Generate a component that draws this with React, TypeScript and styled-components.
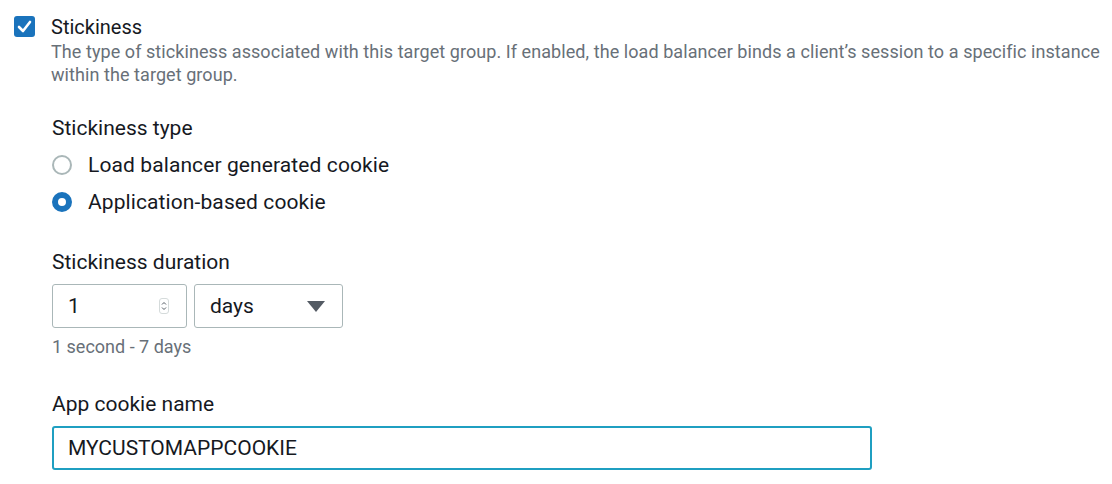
import React from "react";
import styled, { createGlobalStyle } from "styled-components";

const Global = createGlobalStyle`
  body {
    margin: 0;
    background: #ffffff;
    font-family: Roboto, "Noto Sans", sans-serif;
    color: #16191f;
  }
`;

const Page = styled.div`
  padding: 15px 0 0 14px;
  width: 1112px;
  height: 484px;
  box-sizing: border-box;
`;

const Header = styled.div`
  display: flex;
  gap: 16px;
  align-items: flex-start;
`;

const CheckBox = styled.div`
  width: 21px;
  height: 21px;
  margin-top: 1px;
  border-radius: 3px;
  background: #1a73bc;
  display: flex;
  align-items: center;
  justify-content: center;
  flex: none;
`;

const HeaderText = styled.div`
  display: flex;
  flex-direction: column;
`;

const Title = styled.div`
  font-size: 20px;
  line-height: 24px;
  color: #16191f;
`;

const Description = styled.div`
  margin-top: 1px;
  font-size: 18px;
  line-height: 23px;
  color: #687078;
  letter-spacing: 0.07px;
  white-space: nowrap;
`;

const Body = styled.div`
  padding-left: 38px;
  display: flex;
  flex-direction: column;
`;

const Field = styled.div<{ $top: number }>`
  margin-top: ${(p) => p.$top}px;
  display: flex;
  flex-direction: column;
`;

const Label = styled.div`
  font-size: 21px;
  line-height: 26px;
  color: #16191f;
`;

const RadioGroup = styled.div`
  margin-top: 11px;
  display: flex;
  flex-direction: column;
  gap: 11px;
`;

const RadioRow = styled.div`
  display: flex;
  align-items: center;
  gap: 16px;
  height: 26px;
`;

const RadioDot = styled.div<{ $checked?: boolean }>`
  width: 20px;
  height: 20px;
  box-sizing: border-box;
  border-radius: 50%;
  background: #ffffff;
  border: ${(p) => (p.$checked ? "6px solid #1a73bc" : "2px solid #aab7b8")};
  flex: none;
`;

const RadioText = styled.span`
  font-size: 21px;
  line-height: 26px;
  color: #16191f;
  letter-spacing: 0.1px;
`;

const Controls = styled.div`
  margin-top: 9px;
  display: flex;
  gap: 7px;
`;

const Box = styled.div<{ $width: number; $focused?: boolean }>`
  width: ${(p) => p.$width}px;
  height: 44px;
  box-sizing: border-box;
  border: ${(p) => (p.$focused ? "2px solid #1f9fc1" : "1px solid #aab7b8")};
  border-radius: 3px;
  background: #ffffff;
  display: flex;
  align-items: center;
  justify-content: space-between;
  padding: ${(p) => (p.$focused ? "0 14px" : "0 17px 0 15px")};
`;

const BoxValue = styled.span`
  font-size: 21px;
  line-height: 26px;
  color: #16191f;
`;

const Spinner = styled.div`
  width: 10px;
  height: 16px;
  box-sizing: border-box;
  border: 1px solid #d5dbdb;
  border-radius: 3px;
  display: flex;
  align-items: center;
  justify-content: center;
`;

const Hint = styled.div`
  margin-top: 7px;
  font-size: 18px;
  line-height: 23px;
  color: #687078;
`;

const Caret = styled.svg`
  flex: none;
`;

export default function App() {
  return (
    <Page>
      <Global />
      <Header>
        <CheckBox>
          <svg width="15" height="13" viewBox="0 0 15 13">
            <path d="M2 7 L6 11 L13 2" fill="none" stroke="#ffffff" strokeWidth="2.6" strokeLinecap="round" strokeLinejoin="round" />
          </svg>
        </CheckBox>
        <HeaderText>
          <Title>Stickiness</Title>
          <Description>
            The type of stickiness associated with this target group. If enabled, the load balancer binds a client’s session to a specific instance
            <br />
            within the target group.
          </Description>
        </HeaderText>
      </Header>
      <Body>
        <Field $top={29}>
          <Label>Stickiness type</Label>
          <RadioGroup>
            <RadioRow>
              <RadioDot />
              <RadioText>Load balancer generated cookie</RadioText>
            </RadioRow>
            <RadioRow>
              <RadioDot $checked />
              <RadioText>Application-based cookie</RadioText>
            </RadioRow>
          </RadioGroup>
        </Field>
        <Field $top={34}>
          <Label>Stickiness duration</Label>
          <Controls>
            <Box $width={135}>
              <BoxValue>1</BoxValue>
              <Spinner>
                <svg width="6" height="12" viewBox="0 0 6 12">
                  <path d="M1 4.5 L3 2.5 L5 4.5 M1 7.5 L3 9.5 L5 7.5" fill="none" stroke="#545b64" strokeWidth="1" />
                </svg>
              </Spinner>
            </Box>
            <Box $width={149}>
              <BoxValue>days</BoxValue>
              <Caret width="18" height="11" viewBox="0 0 18 11">
                <path d="M0 0 H18 L9 11 Z" fill="#545b64" />
              </Caret>
            </Box>
          </Controls>
          <Hint>1 second - 7 days</Hint>
        </Field>
        <Field $top={33}>
          <Label>App cookie name</Label>
          <Controls>
            <Box $width={820} $focused>
              <BoxValue>MYCUSTOMAPPCOOKIE</BoxValue>
            </Box>
          </Controls>
        </Field>
      </Body>
    </Page>
  );
}
